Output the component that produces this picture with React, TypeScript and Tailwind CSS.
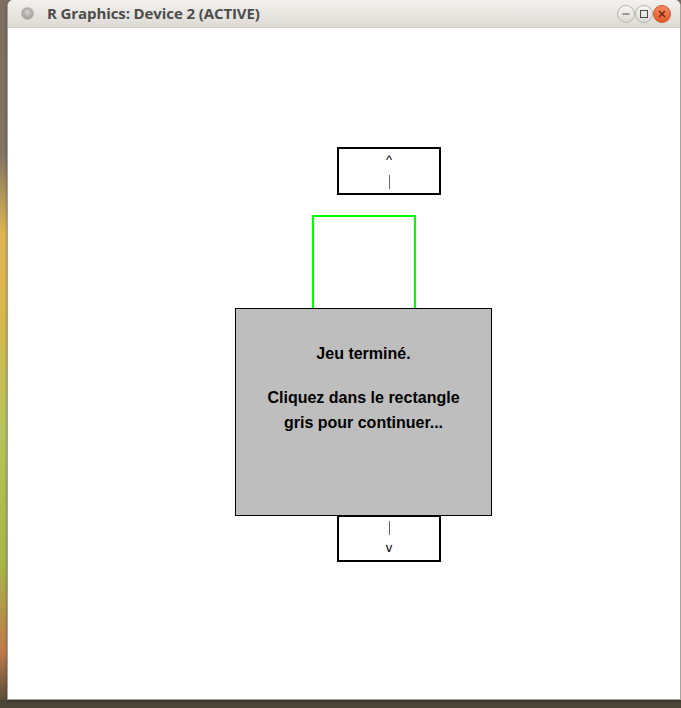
// Fenêtre R Graphics - écran de fin de jeu
import React from "react";

const sans = "font-['Liberation_Sans',Arial,sans-serif]";

function TitleButton({ kind }: { kind: "min" | "max" | "close" }) {
  if (kind === "close") {
    return (
      <div className="w-[18px] h-[18px] rounded-full bg-gradient-to-b from-[#f58a5c] to-[#e4572a] border border-[#c9542c] flex items-center justify-center">
        <svg width="8" height="8" viewBox="0 0 8 8">
          <path d="M1 1L7 7M7 1L1 7" stroke="#5a2210" strokeWidth="1.2" />
        </svg>
      </div>
    );
  }
  return (
    <div className="w-[18px] h-[18px] rounded-full bg-gradient-to-b from-[#f7f6f3] to-[#dcd9d3] border border-[#b9b5ad] flex items-center justify-center">
      {kind === "min" ? (
        <svg width="8" height="8" viewBox="0 0 8 8">
          <path d="M0.5 4H7.5" stroke="#4c4c4c" strokeWidth="1" />
        </svg>
      ) : (
        <svg width="8" height="8" viewBox="0 0 8 8">
          <rect x="0.5" y="0.5" width="7" height="7" fill="none" stroke="#4c4c4c" strokeWidth="1" />
        </svg>
      )}
    </div>
  );
}

export default function App() {
  return (
    <div className="w-[681px] h-[708px] overflow-hidden bg-[linear-gradient(180deg,#7b6f60_0%,#837463_22%,#e0b552_33%,#d8b84a_45%,#b9c45a_60%,#a8b548_80%,#c07a4a_92%,#4b4636_100%)]">
      <div className="w-full h-full bg-[linear-gradient(180deg,transparent_0%,transparent_98.8%,#4a4536_98.8%)] pl-[7px] pb-[8px]">
        {/* Fenêtre */}
        <div className="w-[674px] h-[700px] flex flex-col bg-white border-l border-r border-b border-[#a7a29a] rounded-t-[6px] overflow-hidden shadow-[0_1px_3px_rgba(0,0,0,0.4)]">
          {/* Barre de titre */}
          <div className="h-[28px] shrink-0 flex items-center bg-gradient-to-b from-[#f2f1ed] to-[#dedbd5] border-b border-[#cfcbc4] pl-[13px] pr-[9px]">
            <div className="w-[13px] h-[13px] rounded-full bg-[radial-gradient(circle_at_50%_40%,#d9d7d3_0%,#a7a5a1_60%,#8d8b87_100%)] border border-[#bdbab4]" />
            <div className="ml-[13px] text-[15px] font-bold text-[#4c4c4c] font-['Open_Sans','DejaVu_Sans',sans-serif] tracking-[-0.1px]">
              R Graphics: Device 2 (ACTIVE)
            </div>
            <div className="ml-auto flex items-center gap-0">
              <TitleButton kind="min" />
              <TitleButton kind="max" />
              <TitleButton kind="close" />
            </div>
          </div>

          {/* Zone graphique */}
          <div className={`relative flex-1 bg-white ${sans}`}>
            {/* flèche haut */}
            <div className="absolute left-[329px] top-[119px] w-[104px] h-[48px] border-2 border-black flex flex-col items-center text-[13px] leading-none text-black">
              <span className="mt-[4px]">^</span>
              <div className="mt-[9px] w-[1px] h-[14px] bg-[#6a6a6a]" />
            </div>

            {/* rectangle vert */}
            <div className="absolute left-[304px] top-[187px] w-[104px] h-[95px] border-2 border-[#00ff00]" />

            {/* rectangle gris */}
            <div className="absolute left-[227px] top-[280px] w-[257px] h-[208px] border border-black bg-[#bebebe] flex flex-col items-center font-bold text-[16px] text-black leading-none">
              <span className="mt-[37px]">Jeu terminé.</span>
              <span className="mt-[28px]">Cliquez dans le rectangle</span>
              <span className="mt-[9px]">gris pour continuer...</span>
            </div>

            {/* flèche bas */}
            <div className="absolute left-[329px] top-[487px] w-[104px] h-[47px] border-2 border-black flex flex-col items-center text-[13px] leading-none text-black">
              <div className="mt-[4px] w-[1px] h-[14px] bg-[#6a6a6a]" />
              <span className="mt-[6px]">v</span>
            </div>
          </div>
        </div>
      </div>
    </div>
  );
}
